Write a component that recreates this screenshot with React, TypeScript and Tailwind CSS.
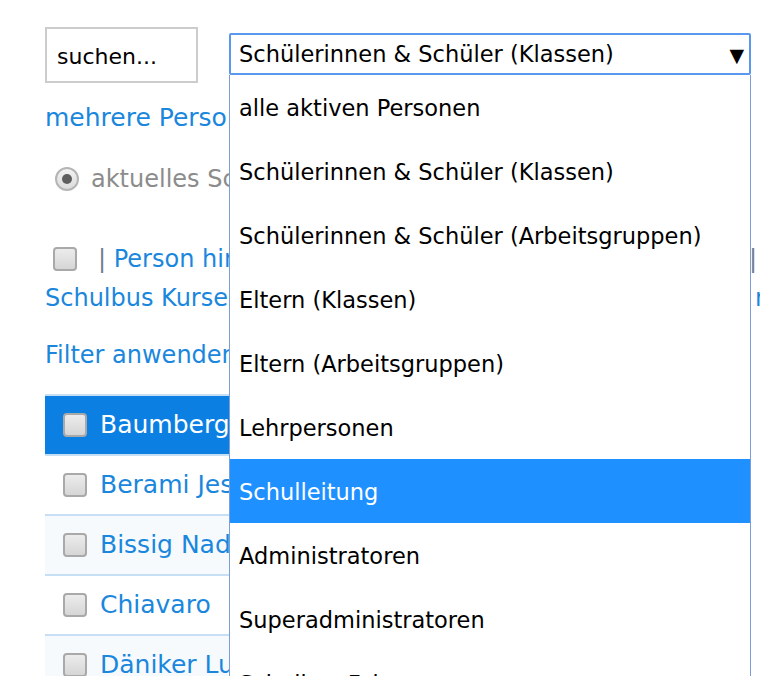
import React from 'react';

const options = [
  'alle aktiven Personen',
  'Schülerinnen & Schüler (Klassen)',
  'Schülerinnen & Schüler (Arbeitsgruppen)',
  'Eltern (Klassen)',
  'Eltern (Arbeitsgruppen)',
  'Lehrpersonen',
  'Schulleitung',
  'Administratoren',
  'Superadministratoren',
  'Schulbus Fahrer',
];

const people = ['Baumberger Lea', 'Berami Jessica', 'Bissig Nadine', 'Chiavaro', 'Däniker Lukas'];

const Box: React.FC = () => (
  <span className="inline-block w-[24px] h-[24px] shrink-0 rounded-[4px] border-2 border-[#a9a9a9] bg-gradient-to-b from-[#ececec] to-[#d6d6d6]" />
);

const App: React.FC = () => {
  return (
    <div className="relative w-[760px] h-[676px] overflow-hidden bg-white font-['DejaVu_Sans',sans-serif]">
      <div className="pl-[45px] pt-[27px]">
        {/* search + select */}
        <div className="flex items-start gap-[31px]">
          <div className="w-[153px] h-[56px] border-2 border-[#cccccc] flex items-center pl-[10px] pt-[2px] text-[22px] text-black">
            suchen...
          </div>
          <div className="relative mt-[6px] w-[522px]">
            <div className="h-[42px] border-2 border-[#5a97ee] rounded-[2px] flex items-center justify-between pl-[8px] pr-[5px] pt-[2px] text-[22.5px] text-black">
              <span>Schülerinnen &amp; Schüler (Klassen)</span>
              <span className="text-[19px] leading-none">▼</span>
            </div>
            <ul className="absolute left-0 top-[42px] w-[522px] h-[640px] bg-white border-x border-[#7b9ed9] z-10">
              {options.map((o, i) => (
                <li
                  key={o}
                  className={`h-[64px] flex items-center pl-[9px] pt-[3px] text-[22.5px] ${i === 6 ? 'bg-[#1e90ff] text-white' : 'text-black'}`}
                >
                  {o}
                </li>
              ))}
            </ul>
          </div>
        </div>

        <div className="mt-[16px] text-[25px] text-[#1a87dd] whitespace-nowrap">mehrere Personen auswählen</div>

        <div className="mt-[24px] flex items-center gap-[12px] pl-[10px] whitespace-nowrap">
          <span className="w-[24px] h-[24px] rounded-full border-2 border-[#b5b5b5] bg-gradient-to-b from-[#f2f2f2] to-[#dcdcdc] flex items-center justify-center">
            <span className="w-[10px] h-[10px] rounded-full bg-[#5e5e5e]" />
          </span>
          <span className="text-[24px] text-[#8c8c8c]">aktuelles Schuljahr</span>
        </div>

        <div className="mt-[43px] pl-[8px] flex items-center justify-between pr-[3px] text-[24px] leading-[39px] whitespace-nowrap">
          <span className="flex items-center gap-[21px]">
            <Box />
            <span className="text-[#1a87dd]">
              <span className="text-[#6d7f93]">| </span>Person hinzufügen
            </span>
          </span>
          <span className="text-[#6d7f93]">|</span>
        </div>
        <div className="flex justify-between text-[24px] leading-[39px] text-[#1a87dd] whitespace-nowrap overflow-hidden w-[715px]">
          <span>Schulbus Kurse</span>
          <span className="w-[5px] overflow-hidden">m</span>
        </div>

        <div className="mt-[19px] text-[24px] text-[#1a87dd] whitespace-nowrap">Filter anwenden</div>

        <div className="mt-[21px] w-[706px] border-t-2 border-[#c6dff5]">
          {people.map((p, i) => (
            <div
              key={p}
              className={`h-[60px] flex items-center gap-[13px] pl-[18px] border-b-2 border-[#c6dff5] ${
                i === 0 ? 'bg-[#0b80e2] text-white' : i % 2 === 0 ? 'bg-[#f6fafd] text-[#1a87dd]' : 'bg-white text-[#1a87dd]'
              }`}
            >
              <Box />
              <span className="text-[25px] whitespace-nowrap">{p}</span>
            </div>
          ))}
        </div>
      </div>
    </div>
  );
};

export default App;
